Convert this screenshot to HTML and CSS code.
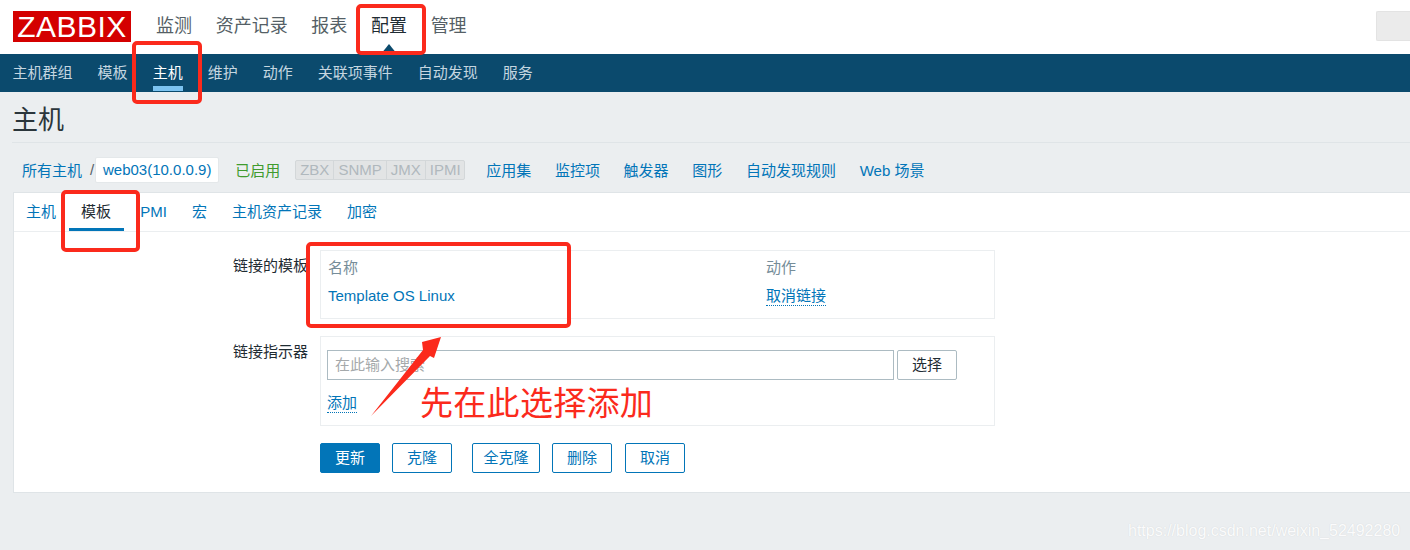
FILE: index.html
```html
<!DOCTYPE html>
<html lang="zh-CN">
<head>
    <meta charset="UTF-8">
    <meta name="viewport" content="width=device-width, initial-scale=1.0">
    <title>主机</title>
    <link rel="stylesheet" href="styles.css">
</head>
<body>
    <header class="topbar">
        <div class="logo">ZABBIX</div>
        <nav class="mainnav">
            <a href="#">监测</a>
            <a href="#">资产记录</a>
            <a href="#">报表</a>
            <a href="#" class="current">配置</a>
            <a href="#">管理</a>
        </nav>
        <div class="searchbox"></div>
    </header>
    <nav class="subnav">
        <a href="#">主机群组</a>
        <a href="#">模板</a>
        <a href="#" class="current">主机</a>
        <a href="#">维护</a>
        <a href="#">动作</a>
        <a href="#">关联项事件</a>
        <a href="#">自动发现</a>
        <a href="#">服务</a>
    </nav>
    <main class="page">
        <h1>主机</h1>
        <div class="crumbs">
            <a href="#">所有主机</a>
            <span class="slash">/</span>
            <a href="#" class="hostname">web03(10.0.0.9)</a>
            <span class="enabled">已启用</span>
            <div class="badges">
                <span>ZBX</span>
                <span>SNMP</span>
                <span>JMX</span>
                <span>IPMI</span>
            </div>
            <div class="crumblinks">
                <a href="#">应用集</a>
                <a href="#">监控项</a>
                <a href="#">触发器</a>
                <a href="#">图形</a>
                <a href="#">自动发现规则</a>
                <a href="#">Web 场景</a>
            </div>
        </div>
        <section class="card">
            <div class="tabs">
                <a href="#">主机</a>
                <a href="#" class="current">模板</a>
                <a href="#">IPMI</a>
                <a href="#">宏</a>
                <a href="#">主机资产记录</a>
                <a href="#">加密</a>
            </div>
            <div class="form">
                <div class="row">
                    <label>链接的模板</label>
                    <div class="box linked">
                        <div class="col-name">
                            <span class="head">名称</span>
                            <a href="#">Template OS Linux</a>
                        </div>
                        <div class="col-action">
                            <span class="head">动作</span>
                            <a href="#" class="dotted">取消链接</a>
                        </div>
                    </div>
                </div>
                <div class="row">
                    <label>链接指示器</label>
                    <div class="box indicator">
                        <div class="searchrow">
                            <input type="text" placeholder="在此输入搜索">
                            <button class="btn select">选择</button>
                        </div>
                        <a href="#" class="dotted add">添加</a>
                    </div>
                </div>
                <div class="actions">
                    <button class="btn primary">更新</button>
                    <button class="btn">克隆</button>
                    <button class="btn wide">全克隆</button>
                    <button class="btn">删除</button>
                    <button class="btn last">取消</button>
                </div>
            </div>
        </section>
    </main>

    <!-- red marks drawn over the screenshot -->
    <div class="mark mark-config"></div>
    <div class="mark mark-host"></div>
    <div class="mark mark-tab"></div>
    <div class="mark mark-list"></div>
    <svg class="arrow" width="90" height="90" viewBox="0 0 90 90">
        <path d="M1 80 L53 14 L52 6 L71 1 L64 22 L60 20 Z" fill="#fb2a1c"/>
    </svg>
    <div class="note">先在此选择添加</div>
    <div class="watermark">https://blog.csdn.net/weixin_52492280</div>
</body>
</html>
```

FILE: styles.css
```css
*{
    margin: 0;
    padding: 0;
    box-sizing: border-box;
}
html, body{
    height: 550px;
    overflow: hidden;
}
body{
    position: relative;
    background-color: #ebeef0;
    font-family: "Liberation Sans", "Noto Sans CJK SC", sans-serif;
    font-size: 15px;
    color: #1f2c33;
}
a{
    color: #0275b8;
    text-decoration: none;
}
.topbar{
    height: 54px;
    background-color: white;
    display: flex;
    padding-left: 13px;
}
.logo{
    width: 118px;
    height: 31px;
    margin-top: 11px;
    background-color: #d40000;
    color: white;
    font-size: 30px;
    line-height: 31px;
    text-align: center;
    letter-spacing: 0.5px;
}
.mainnav{
    display: flex;
    gap: 23.67px;
    margin-left: 25px;
    position: relative;
}
.mainnav a{
    font-size: 18px;
    line-height: 52px;
    color: #555f66;
}
.mainnav a.current{
    color: #1f2c33;
    position: relative;
}
.mainnav a.current::after{
    content: "";
    position: absolute;
    left: 10px;
    bottom: 0;
    border-left: 8px solid transparent;
    border-right: 8px solid transparent;
    border-bottom: 10px solid #0b4a6d;
}
.searchbox{
    width: 34px;
    height: 30px;
    margin: 11px 0 0 auto;
    background-color: #ebebeb;
    border: 1px solid #e3e3e3;
    border-right: none;
    border-radius: 2px 0 0 2px;
}
.subnav{
    height: 38px;
    background-color: #0b4a6d;
    display: flex;
    gap: 25px;
    padding-left: 12.6px;
}
.subnav a{
    color: #c5d6e0;
    line-height: 37px;
    height: 38px;
}
.subnav a.current{
    color: white;
    border-bottom: 5px solid #7cc3f0;
    height: 37px;
}
.page{
    padding-left: 13px;
}
h1{
    font-size: 26px;
    font-weight: normal;
    line-height: 56px;
    height: 51px;
    margin-left: -1px;
    color: #2a353b;
    border-bottom: 1px solid #dfe4e7;
}
.crumbs{
    height: 50px;
    display: flex;
    align-items: center;
    padding: 3px 0 0 9px;
}
.slash{
    margin: 0 1px 0 8px;
    color: #555f66;
}
.hostname{
    background-color: white;
    border: 1px solid #e4e8ea;
    border-radius: 2px;
    width: 124px;
    height: 26px;
    line-height: 24px;
    text-align: center;
}
.enabled{
    color: #3f9b2e;
    margin-left: 16px;
}
.badges{
    display: flex;
    height: 20px;
    margin-left: 15px;
    border: 1px solid #d3d7d9;
    border-radius: 2px;
    background-color: #e2e4e5;
}
.badges span{
    color: #b0b8bd;
    line-height: 18px;
    padding: 0 4px;
    border-left: 1px solid #d3d7d9;
}
.badges span:first-child{
    border-left: none;
}
.badges span:last-child{
    padding-right: 3px;
}
.crumblinks{
    display: flex;
    gap: 23.7px;
    margin-left: 21.6px;
}
.card{
    background-color: white;
    border: 1px solid #dfe4e7;
    border-right: none;
    height: 301px;
    margin-top: -1px;
}
.tabs{
    height: 39px;
    display: flex;
    border-bottom: 1px solid #ebeef0;
    padding-left: 12px;
    gap: 25px;
}
.tabs a{
    line-height: 37px;
}
.tabs a.current{
    color: #1f2c33;
    height: 38px;
    border-bottom: 3px solid #0275b8;
    padding: 0 13px 0 12px;
    margin: 0 -13px 0 -12px;
}
.form{
    padding-top: 18px;
}
.row{
    display: flex;
    margin-bottom: 17px;
}
.row label{
    width: 294px;
    padding-top: 4px;
    text-align: right;
    color: #1f2c33;
}
.box{
    width: 675px;
    margin-left: 12px;
    border: 1px solid #ebeef0;
}
.linked{
    height: 69px;
    display: flex;
    padding: 7px 0 0 7px;
}
.col-name{
    width: 438px;
}
.col-name, .col-action{
    display: flex;
    flex-direction: column;
    align-items: flex-start;
    gap: 8px;
    line-height: 20px;
}
.head{
    color: #768d99;
}
.dotted{
    border-bottom: 1px dotted #0275b8;
    line-height: 19px;
}
.indicator{
    height: 90px;
    padding: 13px 0 0 6px;
}
.searchrow{
    display: flex;
    gap: 3px;
}
.searchrow input{
    width: 567px;
    height: 30px;
    border: 1px solid #acbbc2;
    padding-left: 7px;
    padding-bottom: 2px;
    font-family: inherit;
    font-size: 15px;
    outline: none;
}
.searchrow input::placeholder{
    color: #a5a9ab;
}
.add{
    display: inline-block;
    margin-top: 13px;
}
.btn{
    width: 60px;
    height: 30px;
    padding-bottom: 3px;
    background-color: white;
    color: #0275b8;
    border: 1px solid #0275b8;
    border-radius: 2px;
    font-family: inherit;
    font-size: 15px;
}
.btn.select{
    color: #1f2c33;
    border-color: #acbbc2;
}
.btn.primary{
    background-color: #0275b8;
    color: white;
}
.btn.wide{
    width: 68px;
    margin-left: 8px;
}
.btn.last{
    margin-left: 1px;
}
.actions{
    display: flex;
    gap: 12px;
    margin-left: 306px;
}
.mark{
    position: absolute;
    border: 4px solid #fb2a1c;
    border-radius: 5px;
}
.mark-config{
    left: 356px;
    top: 4px;
    width: 70px;
    height: 51px;
}
.mark-host{
    left: 132px;
    top: 41px;
    width: 70px;
    height: 63px;
}
.mark-tab{
    left: 61px;
    top: 190px;
    width: 79px;
    height: 62px;
}
.mark-list{
    left: 306px;
    top: 242px;
    width: 265px;
    height: 86px;
}
.arrow{
    position: absolute;
    left: 370px;
    top: 336px;
}
.note{
    position: absolute;
    left: 420px;
    top: 383px;
    font-size: 33px;
    letter-spacing: 0.3px;
    line-height: 42px;
    color: #fb2a1c;
}
.watermark{
    position: absolute;
    left: 1128px;
    top: 521px;
    font-size: 16px;
    line-height: 20px;
    color: #ffffff;
    opacity: 0.8;
    text-shadow: 0 0 1px #c9ccce;
}
```
